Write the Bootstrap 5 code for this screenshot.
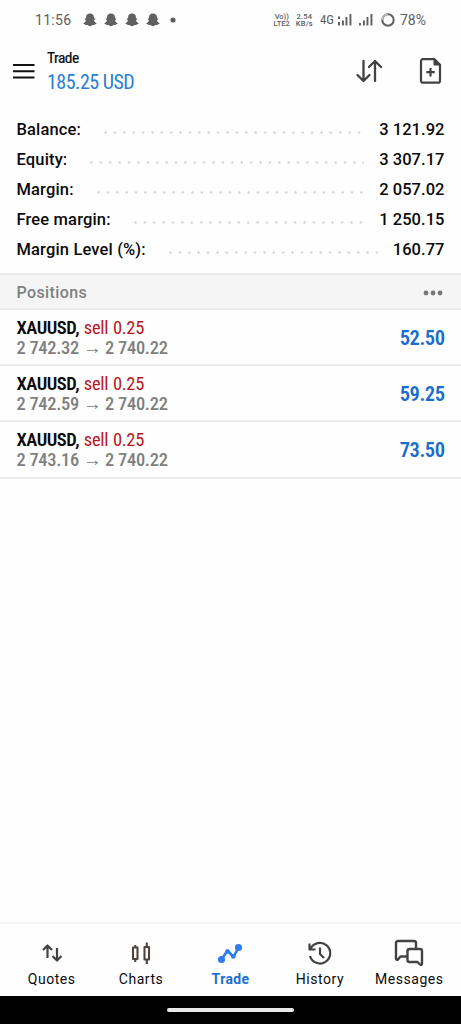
<!DOCTYPE html>
<html lang="en">
<head>
<meta charset="utf-8">
<meta name="viewport" content="width=device-width, initial-scale=1">
<title>Trade</title>
<link href="https://cdn.jsdelivr.net/npm/bootstrap@5.3.0/dist/css/bootstrap.min.css" rel="stylesheet">
<style>
body{font-family:Roboto,"Liberation Sans",sans-serif;color:#0b0b0b;background:#fefefe;height:1024px;overflow:hidden}
svg{display:block;flex:none;stroke-linejoin:round}
.cond{font-family:"Roboto Condensed",Roboto,"Liberation Sans",sans-serif;font-stretch:75%;white-space:nowrap}
.status{height:40px;color:#606060;font-size:14px;padding-left:35px;padding-right:35px;line-height:40px}
.status .clock{letter-spacing:.3px}
.status .ghosts{gap:6.8px;margin-left:12px}
.status .dot{margin-left:10px}
.tiny{font-size:7.5px;line-height:7px;font-weight:500;text-align:center}
.tiny + .tiny{margin-left:6px;letter-spacing:.2px}
.net{font-size:13px;margin-left:7px}
.pct{margin-left:5px}
.topbar{height:70px;padding:7px 16px 0 13px}
.topbar .burger{margin-top:16px}
.topbar .sort{margin-top:11px}
.topbar .neworder{margin:10px 2px 0 36px}
.topbar .title{font-size:15.5px;line-height:22px;letter-spacing:-.55px;-webkit-text-stroke:.2px #0b0b0b}
.topbar .title{letter-spacing:-.5px}
.topbar .profit{font-size:20px;line-height:26px;color:#2a7fd4;letter-spacing:-.5px}
.account{padding:5px 16.5px 0 16.5px;height:163px;font-size:16.5px;font-weight:500}
.account .line{height:29.9px;line-height:30px;letter-spacing:.15px}
.account .amount{letter-spacing:.05px}
.leader{height:3px;margin:5px 15px 0 23px;background:radial-gradient(circle at 1.5px 1.5px,#d9d9d9 1px,transparent 1.5px) 0 0/9.4px 3px repeat-x}
.section{height:37px;background:#f5f5f5;border-top:2px solid #ebebeb;border-bottom:2px solid #e9ecec;color:#808080;font-size:16px;font-weight:500;padding:2px 18px 0 16.5px;letter-spacing:.4px}
.pos{height:56.2px;border-bottom:2px solid #ececec;padding:8px 16.5px 0}
.pos .sym{font-size:18.5px;line-height:20px;font-weight:600;letter-spacing:-.45px;word-spacing:.8px}
.pos .sym span{color:#b81720;font-weight:400;letter-spacing:-.3px}
.pos .price{font-size:18.5px;line-height:20px;font-weight:500;color:#808080;letter-spacing:-.3px}
.pos .gain{font-size:20.5px;font-weight:600;color:#1a6dcc;margin-top:-6px;letter-spacing:-.45px}
.tabs{height:74px;border-top:2px solid #f5f5f5;font-size:14px;letter-spacing:.55px;padding:0 7px}
.tabs .tab{width:20%;padding-top:14px;line-height:20px}
.tabs svg{height:30px;margin-bottom:1px}
.tabs .on{color:#1d6fd0;font-weight:700;letter-spacing:.35px}
.home{height:28px;background:#000}
.home div{width:127px;height:4px;border-radius:2px;background:#e9e9e9}
</style>
</head>
<body class="d-flex flex-column">
<svg width="0" height="0" class="position-absolute"><defs>
<g id="ghost"><path d="M7 .5C4.500 .5 3.100 2 3.100 4v1.600L1.800 5.500l-.1.900 1.300.8C2.700 8.600 1.600 9.600.3 10.200c.2.900 1.200 1 1.900 1.200.3.900 1.300.6 2.100.6.900.2 1.500 1.300 2.700 1.300s1.800-1.100 2.700-1.300c.8 0 1.800.3 2.100-.6.700-.2 1.700-.3 1.900-1.200-1.300-.6-2.400-1.600-2.700-3l1.300-.8-.1-.9-1.300.1V4C10.900 2 9.500.5 7 .5z" fill="#606060"/></g>
</defs></svg>

<header class="status d-flex align-items-center">
  <span class="clock">11:56</span>
  <div class="ghosts d-flex">
    <svg width="14" height="14"><use href="#ghost"/></svg><svg width="14" height="14"><use href="#ghost"/></svg><svg width="14" height="14"><use href="#ghost"/></svg><svg width="14" height="14"><use href="#ghost"/></svg>
  </div>
  <svg class="dot" width="6" height="6"><circle cx="3" cy="3" r="2.600" fill="#606060"/></svg>
  <div class="d-flex align-items-center ms-auto">
    <div class="tiny">Vo))<br>LTE2</div>
    <div class="tiny">2.54<br>KB/s</div>
    <span class="cond net">4G</span>
    <svg class="ms-1" width="14" height="14" fill="#606060"><path d="M0 3.500h2v2.500H0zM0 9h2v3.500H0zM4 7.500h1.900v5H4zM7.500 4h1.900v8.500H7.500zM11.500 1h1.900v11.500h-1.900z"/></svg>
    <svg style="margin-left:7px" width="14" height="14" fill="#606060"><path d="M0 10h1.900v2.500H0zM4 7.500h1.900v5H4zM7.500 4h1.900v8.500H7.500zM11.500 1h1.900v11.500h-1.900z"/></svg>
    <svg class="ms-2" width="14" height="14" fill="none" stroke-width="2"><circle cx="7" cy="7" r="5.700" stroke="#606060"/><path d="M1.300 7A5.700 5.700 0 0 1 7 1.300" stroke="#b4b4b4"/></svg>
    <span class="pct">78%</span>
  </div>
</header>

<nav class="topbar d-flex align-items-start">
  <svg class="burger" width="22" height="16"><path d="M0 2h21.500M0 8.300h21.500M0 14.600h21.500" stroke="#111" stroke-width="2"/></svg>
  <div class="cond" style="margin-left:12px"><div class="title">Trade</div><div class="profit">185.25 USD</div></div>
  <svg class="sort ms-auto" width="28" height="26" fill="none" stroke="#454142" stroke-width="2.300" stroke-linecap="round"><path d="M8.500 3v20M2.500 17l6 6 6-6M20 23V3M14 9l6-6 6 6"/></svg>
  <svg class="neworder" width="24" height="28" fill="none" stroke="#454142" stroke-width="2.200"><path d="M4 2.200h11.500l5.500 5.500v16a2 2 0 0 1-2 2H4a2 2 0 0 1-2-2V4.200a2 2 0 0 1 2-2zM11.500 11v8.500M7.300 15.200h8.500"/><path d="M15 2.200v5.800h6z" fill="#454142" stroke-width="1"/></svg>
</nav>

<section class="account">
  <div class="line d-flex align-items-center"><span>Balance:</span><div class="leader flex-fill"></div><span class="amount">3 121.92</span></div>
  <div class="line d-flex align-items-center"><span>Equity:</span><div class="leader flex-fill"></div><span class="amount">3 307.17</span></div>
  <div class="line d-flex align-items-center"><span>Margin:</span><div class="leader flex-fill"></div><span class="amount">2 057.02</span></div>
  <div class="line d-flex align-items-center"><span>Free margin:</span><div class="leader flex-fill"></div><span class="amount">1 250.15</span></div>
  <div class="line d-flex align-items-center"><span>Margin Level (%):</span><div class="leader flex-fill"></div><span class="amount">160.77</span></div>
</section>

<div class="section d-flex align-items-center justify-content-between"><span>Positions</span>
<svg width="20" height="6" fill="#777"><circle cx="3" cy="3" r="2.400"/><circle cx="10" cy="3" r="2.400"/><circle cx="17" cy="3" r="2.400"/></svg></div>

<main class="flex-fill">
  <div class="pos cond d-flex justify-content-between"><div><div class="sym">XAUUSD, <span>sell 0.25</span></div><div class="price">2 742.32 → 2 740.22</div></div><div class="gain align-self-center">52.50</div></div>
  <div class="pos cond d-flex justify-content-between"><div><div class="sym">XAUUSD, <span>sell 0.25</span></div><div class="price">2 742.59 → 2 740.22</div></div><div class="gain align-self-center">59.25</div></div>
  <div class="pos cond d-flex justify-content-between"><div><div class="sym">XAUUSD, <span>sell 0.25</span></div><div class="price">2 743.16 → 2 740.22</div></div><div class="gain align-self-center">73.50</div></div>
</main>

<footer class="tabs d-flex">
  <div class="tab d-flex flex-column align-items-center"><svg width="30" height="30" fill="none" stroke="#454142" stroke-width="2.200"><path d="M10.500 20V8M6 12l4.500-4.500L15 12M20 10v12M15.500 18l4.500 4.500 4.500-4.500"/></svg>Quotes</div>
  <div class="tab d-flex flex-column align-items-center"><svg width="30" height="30" fill="none" stroke="#4b4541" stroke-width="2.100"><path d="M7 9.500h4.500v11.500H7zM9.300 7v2.500M9.300 21v3M18.500 9h4.500v12.500h-4.500zM20.800 4.500V9M20.800 21.500V26"/></svg>Charts</div>
  <div class="tab on d-flex flex-column align-items-center"><svg width="30" height="30" fill="#2f7df0" stroke="#2f7df0" stroke-width="2.600"><path d="M6.500 21.500l6-9 6 6.500 5-9.500" fill="none"/><circle cx="6.500" cy="21.500" r="2.300"/><circle cx="12.500" cy="13.500" r="1"/><circle cx="18.300" cy="18.500" r="1"/><circle cx="23.500" cy="9.500" r="2.300"/></svg>Trade</div>
  <div class="tab d-flex flex-column align-items-center"><svg width="30" height="30" fill="none" stroke="#454142" stroke-width="2.200"><path d="M5.500 11A10.300 10.300 0 1 1 5 18M4.500 5.500V11.500h6M15 9.500v6.500l4 4"/></svg>History</div>
  <div class="tab d-flex flex-column align-items-center"><svg width="30" height="30" fill="none" stroke="#454142" stroke-width="2.400"><path d="M13 18.500H6.500L4 21.500c-1 .8-2 .3-2-1V5a2 2 0 0 1 2-2h16a2 2 0 0 1 2 2v5M15.500 11H26a2 2 0 0 1 2 2v12.500c0 1.500-1.200 1.800-2 1L23.500 24h-8a2 2 0 0 1-2-2v-9a2 2 0 0 1 2-2z"/></svg>Messages</div>
</footer>
<div class="home d-flex align-items-center justify-content-center"><div></div></div>
<script src="https://cdn.jsdelivr.net/npm/bootstrap@5.3.0/dist/js/bootstrap.bundle.min.js"></script>
</body>
</html>
